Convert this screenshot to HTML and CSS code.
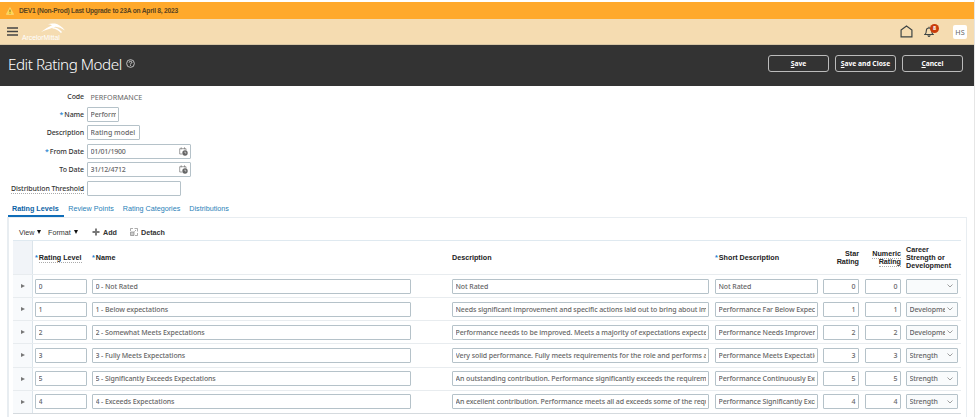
FILE: index.html
```html
<!DOCTYPE html>
<html lang="en">
<head>
    <meta charset="utf-8">
    <title>Edit Rating Model</title>
    <link rel="stylesheet" href="styles.css">
</head>
<body>
    <div class="banner">
        <svg class="warning" viewBox="0 0 8 8"><path d="M4 .5L7.7 7.4H.3Z" fill="#ffd94a" stroke="#f5e19a" stroke-width=".5"/><path d="M4 2.7v2.4M4 5.8v.8" stroke="#6b5410" stroke-width=".8"/></svg>
        <span class="banner-text">DEV1 (Non-Prod) Last Upgrade to 23A on April 8, 2023</span>
    </div>

    <header class="global-bar">
        <svg class="menu" viewBox="0 0 10 8"><path d="M0 .8h10M0 4h10M0 7.2h10" stroke="#444" stroke-width="1.2"/></svg>
        <div class="logo">
            <svg class="logo-mark" viewBox="0 0 24 10"><path d="M7 1.200Q10 0 14 .6Q19 1.500 24 7.500Q19 4 14.500 3.800Q9 5.500 0 9Q5.500 4.500 11 2.200Q9 1.300 7 1.200Z" fill="#fff"/><path d="M11.500 4.800Q16 5 20.500 9.500" stroke="#fff" stroke-width="1.500" fill="none"/></svg>
            <span class="logo-text">ArcelorMittal</span>
        </div>
        <div class="global-icons">
            <svg class="home" viewBox="0 0 12 12"><path d="M1 4.600L6 1l5 3.600V11H1Z" fill="none" stroke="#3d4444" stroke-width="1.100"/></svg>
            <div class="bell">
                <svg class="bell-icon" viewBox="0 0 10 12"><path d="M1 8.500Q2.300 7.500 2.300 4.800Q2.300 2 5 2T7.700 4.800Q7.700 7.500 9 8.500ZM5 .8V2M3.800 9.200Q5 11.600 6.200 9.200" fill="none" stroke="#3d4444" stroke-width="1.100"/></svg>
                <span class="badge">8</span>
            </div>
            <span class="avatar">HS</span>
        </div>
    </header>

    <div class="title-bar">
        <h1>Edit Rating Model</h1>
        <svg class="help" viewBox="0 0 10 10"><circle cx="5" cy="5" r="4.300" fill="none" stroke="#ddd" stroke-width=".9"/><path d="M3.500 4Q3.500 2.600 5 2.600T6.500 3.900Q6.500 4.700 5 5.300V6M5 6.900v.9" fill="none" stroke="#ddd" stroke-width="1"/></svg>
        <div class="actions">
            <button class="btn"><u>S</u>ave</button>
            <button class="btn"><u>S</u>ave and Close</button>
            <button class="btn"><u>C</u>ancel</button>
        </div>
    </div>

    <form class="model-form">
        <label>Code</label>
        <span class="readonly">PERFORMANCE</span>
        <label for="name"><i>*</i>Name</label>
        <input class="field w-name" id="name" value="Performance">
        <label for="description">Description</label>
        <input class="field w-desc" id="description" value="Rating model">
        <label for="fromDate"><i>*</i>From Date</label>
        <div class="field date">
            <input id="fromDate" value="01/01/1900">
            <svg class="calendar" viewBox="0 0 9 9"><path d="M3 7H.7V1.700H7V3.500M2.200.3v2M5.500.3v2" fill="none" stroke="#777" stroke-width=".7"/><circle cx="6" cy="6" r="2.700" fill="#666"/><path d="M6 4.500V6h1.300" fill="none" stroke="#fff" stroke-width=".6"/></svg>
        </div>
        <label for="toDate">To Date</label>
        <div class="field date">
            <input id="toDate" value="31/12/4712">
            <svg class="calendar" viewBox="0 0 9 9"><path d="M3 7H.7V1.700H7V3.500M2.200.3v2M5.500.3v2" fill="none" stroke="#777" stroke-width=".7"/><circle cx="6" cy="6" r="2.700" fill="#666"/><path d="M6 4.500V6h1.300" fill="none" stroke="#fff" stroke-width=".6"/></svg>
        </div>
        <label for="threshold"><span class="hint">Distribution Threshold</span></label>
        <input class="field w-threshold" id="threshold">
    </form>

    <nav class="tabs">
        <a class="tab active">Rating Levels</a>
        <a class="tab">Review Points</a>
        <a class="tab">Rating Categories</a>
        <a class="tab">Distributions</a>
    </nav>

    <section class="panel">
        <div class="toolbar">
            <span class="tool view">View <b class="caret"></b></span>
            <span class="tool format">Format <b class="caret"></b></span>
            <span class="tool add"><svg class="tool-icon" viewBox="0 0 8 8"><path d="M4 .5v7M.5 4h7" stroke="#777" stroke-width="1.900"/></svg>Add</span>
            <span class="tool detach"><svg class="tool-icon" viewBox="0 0 8 8"><path d="M.5 3V.5H3M4.500.5h3v3M7.500 5v2.500H5" fill="none" stroke="#888" stroke-width=".7"/><path d="M.5 4h3.500v3.500H.5ZM4.300 3.700L6 2" fill="#ccc" stroke="#888" stroke-width=".7"/></svg>Detach</span>
        </div>

        <div class="levels">
            <div class="row head">
                <span class="expand"></span>
                <span><i>*</i><span class="hint">Rating Level</span></span>
                <span><i>*</i>Name</span>
                <span>Description</span>
                <span><i>*</i>Short Description</span>
                <span class="num">Star<br>Rating</span>
                <span class="num"><span class="hint">Numeric</span><br><span class="hint">Rating</span></span>
                <span class="career">Career<br>Strength or<br>Development</span>
            </div>
            <div class="row">
                <span class="expand"><b class="arrow"></b></span>
                <input class="field" value="0">
                <input class="field" value="0 - Not Rated">
                <input class="field" value="Not Rated">
                <input class="field" value="Not Rated">
                <input class="field num" value="0">
                <input class="field num" value="0">
                <div class="field select"><span class="choice"></span><svg class="chevron" viewBox="0 0 6 4"><path d="M.5.5L3 3 5.500.5"/></svg></div>
            </div>
            <div class="row">
                <span class="expand"><b class="arrow"></b></span>
                <input class="field" value="1">
                <input class="field" value="1 - Below expectations">
                <input class="field" value="Needs significant improvement and specific actions laid out to bring about improvement">
                <input class="field" value="Performance Far Below Expectations">
                <input class="field num" value="1">
                <input class="field num" value="1">
                <div class="field select"><span class="choice">Development</span><svg class="chevron" viewBox="0 0 6 4"><path d="M.5.5L3 3 5.500.5"/></svg></div>
            </div>
            <div class="row">
                <span class="expand"><b class="arrow"></b></span>
                <input class="field" value="2">
                <input class="field" value="2 - Somewhat Meets Expectations">
                <input class="field" value="Performance needs to be improved. Meets a majority of expectations expected">
                <input class="field" value="Performance Needs Improvement">
                <input class="field num" value="2">
                <input class="field num" value="2">
                <div class="field select"><span class="choice">Development</span><svg class="chevron" viewBox="0 0 6 4"><path d="M.5.5L3 3 5.500.5"/></svg></div>
            </div>
            <div class="row">
                <span class="expand"><b class="arrow"></b></span>
                <input class="field" value="3">
                <input class="field" value="3 - Fully Meets Expectations">
                <input class="field" value="Very solid performance. Fully meets requirements for the role and performs all">
                <input class="field" value="Performance Meets Expectations">
                <input class="field num" value="3">
                <input class="field num" value="3">
                <div class="field select"><span class="choice">Strength</span><svg class="chevron" viewBox="0 0 6 4"><path d="M.5.5L3 3 5.500.5"/></svg></div>
            </div>
            <div class="row">
                <span class="expand"><b class="arrow"></b></span>
                <input class="field" value="5">
                <input class="field" value="5 - Significantly Exceeds Expectations">
                <input class="field" value="An outstanding contribution. Performance significantly exceeds the requirements">
                <input class="field" value="Performance Continuously Exceeds">
                <input class="field num" value="5">
                <input class="field num" value="5">
                <div class="field select"><span class="choice">Strength</span><svg class="chevron" viewBox="0 0 6 4"><path d="M.5.5L3 3 5.500.5"/></svg></div>
            </div>
            <div class="row">
                <span class="expand"><b class="arrow"></b></span>
                <input class="field" value="4">
                <input class="field" value="4 - Exceeds Expectations">
                <input class="field" value="An excellent contribution. Performance meets all ad exceeds some of the requirements">
                <input class="field" value="Performance Significantly Exceeds">
                <input class="field num" value="4">
                <input class="field num" value="4">
                <div class="field select"><span class="choice">Strength</span><svg class="chevron" viewBox="0 0 6 4"><path d="M.5.5L3 3 5.500.5"/></svg></div>
            </div>
        </div>
    </section>
</body>
</html>
```

FILE: styles.css
```css
* {
    box-sizing: border-box;
}

body {
    margin: 0;
    padding-top: 2px;
    height: 417px;
    overflow: hidden;
    background: #fff;
    border-right: 1px solid #e6e6e6;
    font-family: "Noto Sans", "Open Sans", sans-serif;
    font-size: 7.2px;
    color: #333;
}

svg {
    display: block;
    flex: none;
}

i {
    margin-right: 1px;
    color: #1a7fd0;
    font-style: normal;
}

.banner {
    display: flex;
    align-items: center;
    height: 17px;
    padding-left: 6px;
    background: #ffa92b;
    font: bold 6.7px "Liberation Sans", Arial, sans-serif;
    letter-spacing: -0.25px;
    color: #5a4420;
}

.warning {
    width: 8px;
    height: 8px;
    margin-right: 5px;
}

.global-bar {
    display: flex;
    align-items: center;
    height: 26px;
    padding: 0 7px;
    background: #f5dcb1;
    border-bottom: 1px solid #d8c6a4;
}

.menu {
    width: 11px;
    height: 9px;
}

.logo {
    display: flex;
    flex-direction: column;
    width: 46px;
    margin-left: 4px;
    color: #fff;
}

.logo-mark {
    width: 24px;
    height: 10px;
    margin: 1px 0 0 19px;
}

.logo-text {
    font: 6.8px/9px "Liberation Sans", Arial, sans-serif;
}

.global-icons {
    display: flex;
    align-items: center;
    margin-left: auto;
}

.home {
    width: 13px;
    height: 13px;
    margin-right: 11px;
}

.bell {
    position: relative;
    width: 10px;
    margin-right: 19px;
}

.bell-icon {
    width: 10px;
    height: 12px;
}

.badge {
    position: absolute;
    left: 6px;
    top: -2px;
    width: 9px;
    height: 9px;
    border-radius: 50%;
    background: #c93c0b;
    color: #fff;
    font-size: 5.5px;
    font-weight: bold;
    line-height: 9px;
    text-align: center;
}

.avatar {
    width: 14px;
    height: 14px;
    border-radius: 2px;
    background: #fff;
    color: #666;
    line-height: 14px;
    text-align: center;
}

.title-bar {
    display: flex;
    align-items: center;
    height: 41px;
    padding: 0 11px 4px 8px;
    background: #333;
    color: #fff;
}

h1 {
    margin: 0;
    font-size: 15.2px;
    font-weight: 300;
    letter-spacing: -0.45px;
    line-height: 20px;
}

.help {
    width: 9px;
    height: 9px;
    margin-left: 4px;
}

.actions {
    display: flex;
    gap: 6px;
    margin-left: auto;
}

.btn {
    width: 61px;
    height: 17px;
    padding: 0;
    border: 1px solid #bbb;
    border-radius: 3px;
    background: none;
    color: #fff;
    font: bold 6.7px "Noto Sans", sans-serif;
}

.model-form {
    display: grid;
    grid-template-columns: 84px auto;
    grid-template-rows: 17px repeat(5, 18.5px);
    column-gap: 3px;
    align-items: center;
    justify-content: start;
    padding-top: 2px;
    height: 115px;
}

.model-form label {
    text-align: right;
    font-size: 7px;
    font-weight: 500;
    letter-spacing: -0.1px;
    white-space: nowrap;
}

.readonly {
    padding-left: 3.5px;
    color: #666;
}

.hint {
    border-bottom: 1px dotted #aaa;
}

.field {
    width: 100%;
    height: 15px;
    padding: 0 2.5px;
    border: 1px solid #b5c2c9;
    border-radius: 1px;
    background: #fff;
    color: #666;
    font: 500 7px "Noto Sans", sans-serif;
    letter-spacing: -0.1px;
}

.w-name {
    width: 32px;
}

.w-desc {
    width: 53px;
    letter-spacing: 0;
}

.w-threshold {
    width: 94px;
}

.date {
    display: flex;
    align-items: center;
    width: 104px;
}

.date input {
    flex: 1;
    min-width: 0;
    padding: 0;
    border: 0;
    color: inherit;
    font: inherit;
    letter-spacing: -0.25px;
}

.calendar {
    width: 9px;
    height: 9px;
}

.tabs {
    display: flex;
    gap: 9px;
    height: 16px;
    padding-left: 8px;
    font: 7.2px/15px "Liberation Sans", Arial, sans-serif;
}

.tab {
    color: #2a7fb8;
}

.tab.active {
    padding: 0 5px 0 4px;
    margin-right: -4.5px;
    border-bottom: 2px solid #0f6db8;
    color: #0b62a5;
    font-weight: bold;
}

.panel {
    height: 201px;
    margin: 0 7px 0 7px;
    padding: 0 5px 0 4px;
    border: solid #e8edf1;
    border-width: 1px 1px 0 2px;
}

.toolbar {
    display: flex;
    align-items: center;
    height: 22px;
    padding: 6px 0 0 6px;
    font: 7.2px "Liberation Sans", Arial, sans-serif;
}

.tool {
    display: flex;
    align-items: center;
}

.view {
    width: 29px;
}

.format {
    width: 44px;
}

.add {
    width: 38px;
    font-weight: bold;
}

.detach {
    font-weight: bold;
}

.tool-icon {
    width: 8px;
    height: 8px;
    margin-right: 3px;
}

.caret {
    margin-left: 3px;
    border: solid transparent;
    border-width: 4px 2.5px 0;
    border-top-color: #111;
}

.levels {
    border-top: 1px solid #dfe9f0;
}

/* each track holds the column plus the space after it */
.row {
    display: grid;
    grid-template-columns: 22px 57px 360px 263px 108px 42px 41px 52px;
    align-items: center;
    height: 23.15px;
    border-bottom: 1px solid #e8ecef;
}

.row > :nth-child(2) {
    width: 52px;
    white-space: nowrap;
}

.row > :nth-child(3) {
    width: 319px;
}

.row > :nth-child(4) {
    width: 257px;
}

.row > :nth-child(5) {
    width: 103px;
}

.row > :nth-child(6),
.row > :nth-child(7) {
    width: 36px;
}

.row:last-child {
    border-bottom-color: #d5dade;
}

.head {
    height: 34px;
    color: #222;
    font: bold 7.2px/8px "Liberation Sans", Arial, sans-serif;
}

.num {
    text-align: right;
}

.career {
    white-space: nowrap;
}

.expand {
    display: flex;
    align-items: center;
    align-self: stretch;
    width: 20px;
    padding-left: 8px;
    background: #f8fafc;
    border-right: 1px solid #dbe4ea;
}

.head .expand {
    background: #f1f4f8;
}

.arrow {
    border: solid transparent;
    border-width: 2.5px 0 2.5px 4px;
    border-left-color: #777;
}

.select {
    display: flex;
    align-items: center;
    padding-right: 4px;
    background: #f9fbfc;
}

.choice {
    flex: 1;
    margin-right: 2px;
    overflow: hidden;
    white-space: nowrap;
}

.chevron {
    width: 6px;
    height: 4px;
    fill: none;
    stroke: #777;
    stroke-width: 0.7;
}
```
